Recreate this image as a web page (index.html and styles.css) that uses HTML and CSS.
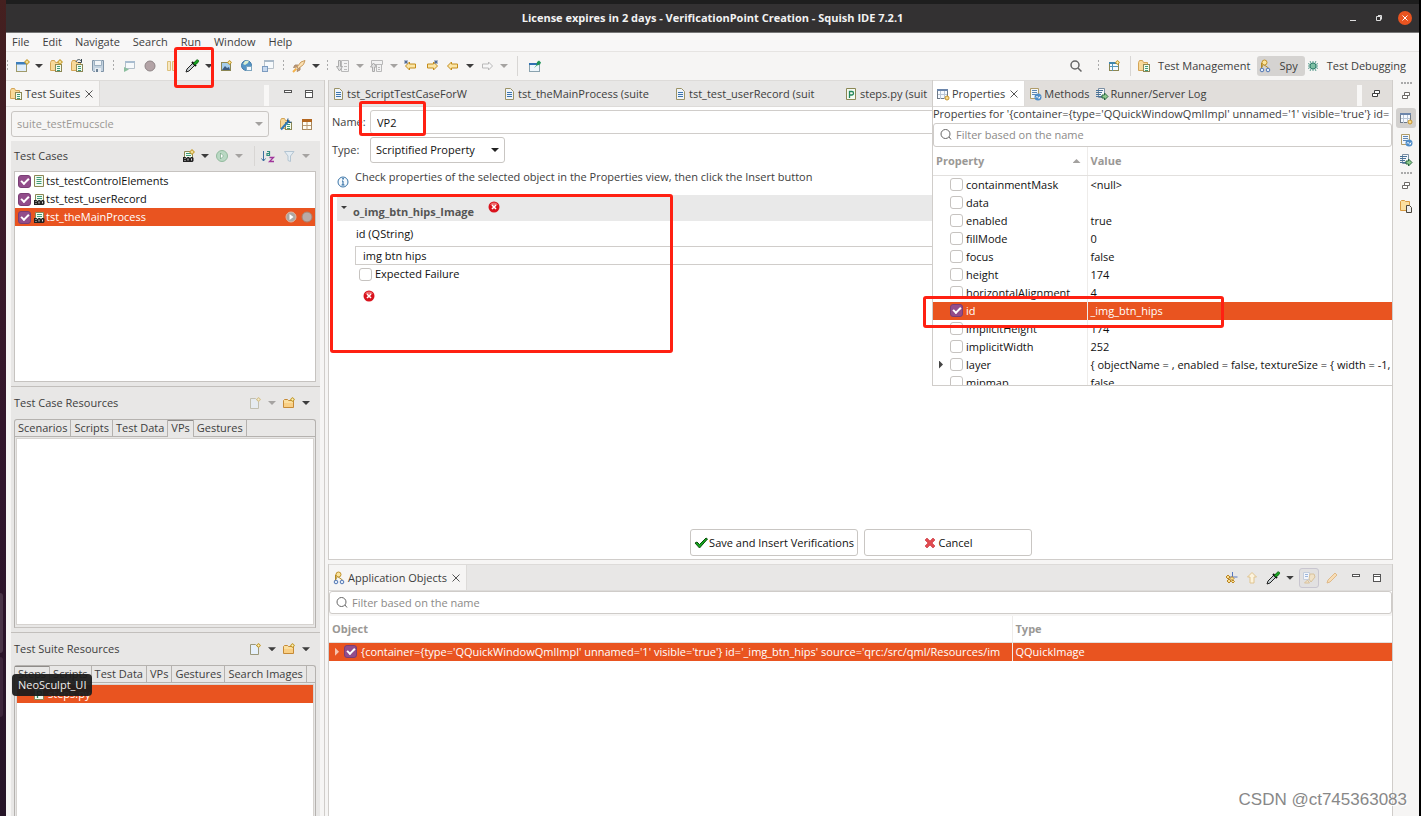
FILE: index.html
```html
<!DOCTYPE html>
<html lang="en">
<head>
<meta charset="utf-8">
<title>VerificationPoint Creation - Squish IDE 7.2.1</title>
<link rel="stylesheet" href="styles.css">
</head>
<body>
<svg class="sprite" aria-hidden="true">
  <symbol id="plus" viewBox="0 0 6 6"><path d="M3 0L6 3 3 6 0 3z" fill="#c39a2c"/><path d="M3 1.6v2.8M1.6 3h2.8" stroke="#fff3b8"/></symbol>
  <symbol id="new" viewBox="0 0 16 16"><rect x="2.500" y="4.500" width="10" height="9" fill="#dfedfa" stroke="#a09a6a"/><path d="M2 4h11v2.500H2z" fill="#3c7ebc"/><use href="#plus" x="10" y="1" width="6" height="6"/></symbol>
  <symbol id="suite" viewBox="0 0 16 16"><path d="M2.500 12.500v-8l1-2h3l1 2h4v8z" fill="#f8d99a" stroke="#d3a456"/><rect x="7.500" y="6.500" width="6" height="7" fill="#f4fbf0" stroke="#8b8754"/><path d="M9 8.500h3M9 10.500h3M9 12.500h3" stroke="#3f9a78"/></symbol>
  <symbol id="newsuite" viewBox="0 0 16 16"><use href="#suite" width="16" height="16"/><use href="#plus" x="9" y="1" width="6" height="6"/></symbol>
  <symbol id="opensuite" viewBox="0 0 16 16"><use href="#suite" width="16" height="16"/><path d="M7 4c1-3 4-3 5-1M12.500 1v3.500H9" fill="none" stroke="#37474f"/></symbol>
  <symbol id="save" viewBox="0 0 16 16"><path d="M2.500 2.500h11v11h-10l-1-1z" fill="#c3d2df" stroke="#8195a8"/><path d="M4.500 2.500h7v5h-7z" fill="#f2f5f8" stroke="#9db0c0"/><path d="M5 10h6v4H5z" fill="#e8edf2"/><path d="M6 11h2v3H6z" fill="#6d8296"/></symbol>
  <symbol id="launch" viewBox="0 0 16 16"><path d="M4.500 3.500h9v7h-9z" fill="#f6f9fb" stroke="#b3bfc9"/><path d="M4 3h10v2H4z" fill="#a9bdd0"/><path d="M3 9l5 2.500L3 14z" fill="#8cbf9f"/></symbol>
  <symbol id="stop" viewBox="0 0 16 16"><circle cx="8" cy="8" r="5" fill="#b3a3a6" stroke="#8f8587"/></symbol>
  <symbol id="pause" viewBox="0 0 16 16"><path d="M4.500 3.500h3v9h-3zM9.500 3.500h3v9h-3z" fill="#f7e8c2" stroke="#dcc07a"/></symbol>
  <symbol id="pick" viewBox="0 0 16 16"><path d="M2 14l1-3 6-6 2 2-6 6z" fill="#c9d1d3" stroke="#222"/><path d="M8 4l4 4" stroke="#111" stroke-width="2"/><path d="M9.500 5.500l2.500-3c2-1.500 3.500 0 2 2l-3 2.500z" fill="#18a321" stroke="#0b6a12"/></symbol>
  <symbol id="image" viewBox="0 0 16 16"><rect x="3.500" y="4.500" width="9" height="8" fill="#a5cdec" stroke="#8b8754"/><path d="M4 12l3-4 2 2 2-1 1 3z" fill="#3b5b81"/><use href="#plus" x="9" y="2" width="5" height="5"/></symbol>
  <symbol id="globe" viewBox="0 0 16 16"><circle cx="7.500" cy="7.500" r="5" fill="#5496c6" stroke="#417aa8"/><path d="M4 6l2-3 4-.5L9 5 6 7z" fill="#d9eed0"/><rect x="7.500" y="8.500" width="5" height="4" fill="#f4fafd" stroke="#7ea6c0"/></symbol>
  <symbol id="windows" viewBox="0 0 16 16"><path d="M4.500 2.500h9v8h-9z" fill="#f7fafc" stroke="#b9c2ca"/><path d="M4 2h10v2H4z" fill="#a9b9c8"/><rect x="2.500" y="8.500" width="5" height="5" fill="#c6d8ee" stroke="#7d9cc0"/></symbol>
  <symbol id="rocket" viewBox="0 0 16 16"><path d="M6 9l4-5 4-1.500-1.500 4-5 4z" fill="#fbe0b2" stroke="#c99a5b"/><path d="M7 7H4L2.500 9.500 6 9M9 9.500V12l-3 1.500L7 10" fill="#c9a27a" stroke="#9c7a5b" stroke-width=".8"/><path d="M2 14l3.500-3.500" stroke="#f4b24a" stroke-width="2"/></symbol>
  <symbol id="stepdown" viewBox="0 0 16 16"><path d="M6.500 2.500h7v11h-7z" fill="#f2f2f2" stroke="#b9b9b9"/><path d="M9 5.500h3M9 8.500h3M9 11.500h3" stroke="#bbb"/><path d="M3.500 2.500h2v6h2l-3 4.500-3-4.500h2z" fill="#e2e2e2" stroke="#aaa"/></symbol>
  <symbol id="stepup" viewBox="0 0 16 16"><path d="M2.500 2.500h11v4h-11zM7.500 6.500h5v7h-5z" fill="#f2f2f2" stroke="#b9b9b9"/><path d="M9 9.500h2M9 11.500h2" stroke="#bbb"/><path d="M3.500 13.500V9h-2l3-4 3 4h-2v4.500z" fill="#e2e2e2" stroke="#aaa"/></symbol>
  <symbol id="back" viewBox="0 0 16 16"><path d="M2.500 8l4-4v2h6v4h-6v2z" fill="#fbe6a7" stroke="#c48c1b"/></symbol>
  <symbol id="fwd" viewBox="0 0 16 16"><path d="M13.500 8l-4-4v2h-6v4h6v2z" fill="#fbe6a7" stroke="#c48c1b"/></symbol>
  <symbol id="fwdoff" viewBox="0 0 16 16"><path d="M13.500 8l-4-4v2h-6v4h6v2z" fill="#f7f7f7" stroke="#b9b9b9"/></symbol>
  <symbol id="backedit" viewBox="0 0 16 16"><use href="#back" width="16" height="16"/><path d="M3 2v4M1 4h4M1.500 2.500l3 3M4.500 2.500l-3 3" stroke="#45618c" stroke-width=".8"/></symbol>
  <symbol id="fwdedit" viewBox="0 0 16 16"><use href="#fwd" width="16" height="16"/><path d="M12 2v4M10 4h4M10.500 2.500l3 3M13.500 2.500l-3 3" stroke="#45618c" stroke-width=".8"/></symbol>
  <symbol id="pin" viewBox="0 0 16 16"><rect x="2.500" y="5.500" width="10" height="8" fill="#eef6fb" stroke="#8aa2ae"/><path d="M2 5h8v2H2z" fill="#2f71b2"/><path d="M7 10l2.500-3 .5-3 2-1.500 2 2-1 2-3 1z" fill="#1f9357"/></symbol>
  <symbol id="search" viewBox="0 0 16 16"><circle cx="7" cy="7" r="4" fill="none" stroke="#666" stroke-width="1.500"/><path d="M10 10l3.500 3.500" stroke="#666" stroke-width="1.500"/></symbol>
  <symbol id="find" viewBox="0 0 16 16"><circle cx="7.500" cy="7" r="4.500" fill="none" stroke="currentColor"/><path d="M11 10l2 2.500" stroke="currentColor"/></symbol>
  <symbol id="persp" viewBox="0 0 16 16"><rect x="3.500" y="4.500" width="9" height="8" fill="#f4faff" stroke="#8b8754"/><path d="M3 4h8v2H3z" fill="#3f86ac"/><path d="M6.500 6v7M4 8.500h8" stroke="#5797b8"/><use href="#plus" x="9" y="2" width="5" height="5"/></symbol>
  <symbol id="spy" viewBox="0 0 16 16"><path d="M4.500 10V5l7 5M7 5l-3 6" stroke="#b28a24" fill="none"/><circle cx="7.500" cy="4.500" r="2.500" fill="#fbe49c" stroke="#c1912b"/><circle cx="5" cy="12" r="1.800" fill="#e2edf9" stroke="#5277b5"/><circle cx="11" cy="12" r="1.800" fill="#e2edf9" stroke="#5277b5"/></symbol>
  <symbol id="bug" viewBox="0 0 16 16"><path d="M8 3v10M5 3l1.500 3M11 3L9.500 6M3 8h10M3 5.500l10 5M3 10.500l10-5M5 13l1.500-3M11 13l-1.500-3" stroke="#4b9384" stroke-width=".9"/><circle cx="8" cy="8" r="3" fill="#7dbfa4" stroke="#2f7f6b"/></symbol>
  <symbol id="wrench" viewBox="0 0 16 16"><use href="#suite" width="16" height="16"/><path d="M3 13.500l8-9" stroke="#2d78b8" stroke-width="2"/><path d="M10 2.500L9.500 5l1.500 1.500 2.500-.5" fill="none" stroke="#174f86"/></symbol>
  <symbol id="table" viewBox="0 0 16 16"><rect x="3.500" y="3.500" width="9" height="10" fill="#fffdf5" stroke="#a9885d"/><path d="M3 3h10v3H3z" fill="#b3661f"/><path d="M8 6v8M4 9.500h8" stroke="#b99c78"/></symbol>
  <symbol id="doc" viewBox="0 0 16 16"><path d="M3.500 2.500h9v11h-9z" fill="#f3fbf2" stroke="#8b8754"/><path d="M5.500 4.500h5M5.500 6.500h5M5.500 8.500h5M5.500 10.500h5" stroke="#3f9a78"/></symbol>
  <symbol id="bdd" viewBox="0 0 16 16"><path d="M4.500 3.500h8v7h-8z" fill="#f3fbf2" stroke="#8b8754"/><path d="M6 5.500h5M6 7.500h5" stroke="#3f9a78"/><path d="M3 9h2.500l1 1 1-1H9l1 1 1-1h1.500l1 1v3l-1 1H3z" fill="#222"/><path d="M4.500 10.500h1M4.500 12.500h1M8 10.500v2M11.500 10.500v2" stroke="#eee" stroke-width=".9"/></symbol>
  <symbol id="newbdd" viewBox="0 0 16 16"><use href="#bdd" width="16" height="16"/><use href="#plus" x="9" y="1" width="6" height="6"/></symbol>
  <symbol id="play" viewBox="0 0 16 16"><circle cx="8" cy="8" r="5.500" fill="#b9d8c3" stroke="#93bb9e"/><path d="M6.500 5l3 3-3 3z" fill="#fff" stroke="#6a9a78" stroke-width=".6"/></symbol>
  <symbol id="playg" viewBox="0 0 16 16"><circle cx="8" cy="8" r="5" fill="#aaa6a3" stroke="#e1b49f"/><path d="M6.500 5l4 3-4 3z" fill="#fff"/></symbol>
  <symbol id="stopg" viewBox="0 0 16 16"><circle cx="8" cy="8" r="5" fill="#b9aaa6" stroke="#a9816f"/></symbol>
  <symbol id="sort" viewBox="0 0 16 16"><path d="M3.500 3v10M1.500 10.500l2 2.500 2-2.500" fill="none" stroke="#3d6fa0"/><path d="M7 3.500h2.500V7.500H7V5.500h2.500" fill="none" stroke="#2d8c7c" stroke-width="1.200"/><path d="M9.500 9.500h4l-4 4h4.500" fill="none" stroke="#a0369c" stroke-width="1.300"/></symbol>
  <symbol id="filter" viewBox="0 0 16 16"><path d="M3.500 3.500h9.500L9.500 8v5.500l-2.500-1V8z" fill="#e4ecf2" stroke="#b4c5d2"/></symbol>
  <symbol id="newfile" viewBox="0 0 16 16"><path d="M3.500 3.500h5l3 3v7h-8z" fill="#e6f0fb" stroke="#9b987b"/><use href="#plus" x="9" y="2" width="5" height="5"/></symbol>
  <symbol id="newfolder" viewBox="0 0 16 16"><path d="M2.500 12.500v-7l1-1h3l1 1h5v7z" fill="#fbdf9f" stroke="#c58a37"/><path d="M3 8h9v4H3z" fill="#f9cf84"/><use href="#plus" x="9" y="2" width="5" height="5"/></symbol>
  <symbol id="page" viewBox="0 0 16 16"><path d="M4.500 2.500h5l3 3v8h-8z" fill="#eef4fb" stroke="#9c9366"/><path d="M6 6.500h5M6 8.500h5M6 10.500h5" stroke="#3b74ad"/></symbol>
  <symbol id="py" viewBox="0 0 16 16"><path d="M3.500 2.500h9v11h-9z" fill="#f3fbf2" stroke="#8b8754"/><path d="M6.500 12V5.500H9q1.500 0 1.500 1.700T9 9H6.500" fill="none" stroke="#23855a" stroke-width="1.300"/></symbol>
  <symbol id="props" viewBox="0 0 16 16"><rect x="2.500" y="3.500" width="10" height="9" fill="#f6faff" stroke="#6e7987"/><path d="M2 3h11v2H2z" fill="#6c86ab"/><path d="M5.500 5v8M9.500 5v8M3 8.500h9" stroke="#b9c6d6"/><circle cx="12" cy="12" r="2" fill="#fbdc8c" stroke="#c6952f"/></symbol>
  <symbol id="methods" viewBox="0 0 16 16"><path d="M3.500 2.500h8v10h-8z" fill="#f4f7fa" stroke="#b09c69"/><path d="M5 4.500h5M5 6.500h5M5 8.500h5" stroke="#5e87b5"/><circle cx="11" cy="11" r="3.500" fill="#4f8dc9"/><path d="M9 11.500q1-2.500 2 0t2-1" fill="none" stroke="#fff"/></symbol>
  <symbol id="log" viewBox="0 0 16 16"><path d="M4.500 2.500h6v9h-6z" fill="#f4f7fa" stroke="#7c8fa3"/><path d="M2 4.500h7M2 6.500h6M2 8.500h5M2 10.500h6" stroke="#4b7398"/><path d="M8 9h2.500V7l3.500 3.500-3.500 3.500v-2H8z" fill="#8fca8d" stroke="#2b6842"/></symbol>
  <symbol id="files" viewBox="0 0 16 16"><path d="M2.500 12.500v-9l1-1h3l1 1h4v9z" fill="#fbdf9f" stroke="#d79a3f"/><path d="M8.500 7.500h3l2 2v5h-5z" fill="#eee" stroke="#4b463d"/></symbol>
  <symbol id="min" viewBox="0 0 16 16"><rect x="4.500" y="4.500" width="7" height="2" fill="#fff" stroke="#555"/></symbol>
  <symbol id="max" viewBox="0 0 16 16"><rect x="4.500" y="4.500" width="7" height="7" fill="#fff" stroke="#555"/><path d="M4 6.500h8" stroke="#555"/></symbol>
  <symbol id="restore" viewBox="0 0 16 16"><path d="M6.500 4.500h5v3h-5zM4.500 7.500h5v3h-5z" fill="#fff" stroke="currentColor"/></symbol>
  <symbol id="close" viewBox="0 0 16 16"><path d="M4.500 4.500l7 7M11.500 4.500l-7 7" stroke="#555"/></symbol>
  <symbol id="error" viewBox="0 0 16 16"><circle cx="8" cy="8" r="5.500" fill="#d9131d"/><path d="M4 6a4.500 4.500 0 018 0z" fill="#ee6a6c"/><path d="M6 6l4 4M10 6l-4 4" stroke="#fff" stroke-width="1.600"/></symbol>
  <symbol id="info" viewBox="0 0 16 16"><circle cx="8" cy="8" r="5" fill="#f4f9fd" stroke="#3974a8"/><path d="M7 7h1v4M6.500 11h3" fill="none" stroke="#23659f"/><path d="M7.300 4.800h1.500" stroke="#23659f" stroke-width="1.500"/></symbol>
  <symbol id="check" viewBox="0 0 16 16"><path d="M2 8l2-1 2.500 2.500L13 3l1.500 1L6.500 13z" fill="#17a51d" stroke="#08500c"/></symbol>
  <symbol id="cross" viewBox="0 0 16 16"><path d="M3 5l2-2 3 3 3-3 2 2-3 3 3 3-2 2-3-3-3 3-2-2 3-3z" fill="#e14a50" stroke="#c62f38" stroke-width=".6"/></symbol>
  <symbol id="tree" viewBox="0 0 16 16"><path d="M9.500 2v10M6 7h8.500" stroke="#5677c0"/><path d="M5 5l2 2-2 2-2-2zM9 6.500l2 2-2 2-2-2zM6 9l2 2-2 2-2-2zM10 10l1.500 1.500L10 13l-1.500-1.500z" fill="#fbdc8c" stroke="#b98523"/></symbol>
  <symbol id="up" viewBox="0 0 16 16"><path d="M8 2.500l4.500 4.500H10v6H6V7H3.500z" fill="#fcf3dd" stroke="#e0c48f"/></symbol>
  <symbol id="link" viewBox="0 0 16 16"><path d="M2.500 2.500h6v7h-6z" fill="#f3f6fb" stroke="#c5cedb"/><path d="M4 4.500h3M4 6.500h3" stroke="#9cb6dc"/><path d="M3.500 13l3-3 2 3zM9 4h4l1 3-4 5-2-3z" fill="#f0e2c8" stroke="#d8c29c"/></symbol>
  <symbol id="pencil" viewBox="0 0 16 16"><path d="M3 13l1-3 7-7 2 2-7 7z" fill="#f8ddb6" stroke="#dfb988"/></symbol>
</svg>

<div class="desktop">
  <div class="launcher"><span class="dock"></span><span class="dock dock-long"></span></div>
  <div class="window">
    <header class="titlebar">
      <h1 class="title">License expires in 2 days - VerificationPoint Creation - Squish IDE 7.2.1</h1>
      <div class="wincontrols">
        <button class="winbtn" aria-label="Minimize"><svg viewBox="0 0 14 14"><path d="M4 9.500h6" stroke="#ddd"/></svg></button>
        <button class="winbtn" aria-label="Restore"><svg viewBox="0 0 14 14"><path d="M4.500 5.500h4v4h-4zM6 4.500h3.500v4" fill="none" stroke="#ddd"/></svg></button>
        <button class="winbtn winclose" aria-label="Close"><svg viewBox="0 0 14 14"><path d="M4.500 4.500l5 5M9.500 4.500l-5 5" stroke="#fff"/></svg></button>
      </div>
    </header>
    <nav class="menubar">
      <button>File</button><button>Edit</button><button>Navigate</button><button>Search</button><button>Run</button><button>Window</button><button>Help</button>
    </nav>
    <div class="toolbar">
      <span class="grip"></span>
      <button class="tool" aria-label="New"><svg><use href="#new"/></svg></button><button class="caret" aria-label="New options"></button>
      <button class="tool" aria-label="New suite"><svg><use href="#newsuite"/></svg></button>
      <button class="tool" aria-label="Open suite"><svg><use href="#opensuite"/></svg></button>
      <button class="tool" aria-label="Save"><svg><use href="#save"/></svg></button>
      <span class="grip"></span>
      <button class="tool" aria-label="Launch"><svg><use href="#launch"/></svg></button>
      <button class="tool" aria-label="Stop"><svg><use href="#stop"/></svg></button>
      <button class="tool" aria-label="Pause"><svg><use href="#pause"/></svg></button>
      <button class="tool marked" aria-label="Pick"><svg><use href="#pick"/></svg></button><button class="caret" aria-label="Pick options"></button>
      <button class="tool" aria-label="Image"><svg><use href="#image"/></svg></button>
      <button class="tool" aria-label="Web"><svg><use href="#globe"/></svg></button>
      <button class="tool" aria-label="Windows"><svg><use href="#windows"/></svg></button>
      <span class="grip"></span>
      <button class="tool" aria-label="External tools"><svg><use href="#rocket"/></svg></button><button class="caret" aria-label="Tool options"></button>
      <span class="grip"></span>
      <button class="tool" aria-label="Next annotation"><svg><use href="#stepdown"/></svg></button><button class="caret off" aria-label="Next options"></button>
      <button class="tool" aria-label="Previous annotation"><svg><use href="#stepup"/></svg></button><button class="caret off" aria-label="Previous options"></button>
      <button class="tool" aria-label="Last edit"><svg><use href="#backedit"/></svg></button>
      <button class="tool" aria-label="Next edit"><svg><use href="#fwdedit"/></svg></button>
      <button class="tool" aria-label="Back"><svg><use href="#back"/></svg></button><button class="caret" aria-label="Back options"></button>
      <button class="tool" aria-label="Forward"><svg><use href="#fwdoff"/></svg></button><button class="caret off" aria-label="Forward options"></button>
      <span class="vsep"></span>
      <button class="tool" aria-label="Pin editor"><svg><use href="#pin"/></svg></button>
      <div class="perspectives">
        <button class="tool find" aria-label="Search"><svg><use href="#search"/></svg></button>
        <span class="grip"></span>
        <button class="tool" aria-label="Open perspective"><svg><use href="#persp"/></svg></button>
        <span class="vsep"></span>
        <div class="switcher">
          <button class="persp"><svg><use href="#suite"/></svg>Test Management</button>
          <button class="persp current"><svg><use href="#spy"/></svg>Spy</button>
          <button class="persp"><svg><use href="#bug"/></svg>Test Debugging</button>
        </div>
      </div>
    </div>

    <div class="workspace">
      <aside class="side">
        <div class="tabbar">
          <button class="tab active"><svg><use href="#suite"/></svg>Test Suites<svg><use href="#close"/></svg></button>
          <div class="tabtools"><span class="notch"></span><button class="tool" aria-label="Minimize view"><svg><use href="#min"/></svg></button><button class="tool" aria-label="Maximize view"><svg><use href="#max"/></svg></button></div>
        </div>
        <div class="suiterow">
          <div class="combobox"><select class="combo" aria-label="Test suite"><option>suite_testEmucscle</option></select></div>
          <button class="tool" aria-label="Suite settings"><svg><use href="#wrench"/></svg></button>
          <button class="tool" aria-label="Suite table"><svg><use href="#table"/></svg></button>
        </div>
        <div class="groups">
          <section class="group cases">
            <div class="grouphead"><h2>Test Cases</h2>
              <button class="tool" aria-label="New test case"><svg><use href="#newbdd"/></svg></button><button class="caret" aria-label="New options"></button>
              <button class="tool" aria-label="Run"><svg><use href="#play"/></svg></button><button class="caret off" aria-label="Run options"></button>
              <span class="vsep"></span>
              <button class="tool" aria-label="Sort"><svg><use href="#sort"/></svg></button>
              <button class="tool" aria-label="Filter"><svg><use href="#filter"/></svg></button><button class="caret off" aria-label="Filter options"></button>
            </div>
            <ul class="list">
              <li><label><input type="checkbox" checked><svg><use href="#doc"/></svg>tst_testControlElements</label></li>
              <li><label><input type="checkbox" checked><svg><use href="#bdd"/></svg>tst_test_userRecord</label></li>
              <li class="selected"><label><input type="checkbox" checked><svg><use href="#bdd"/></svg>tst_theMainProcess</label><span class="rowtools"><svg><use href="#playg"/></svg><svg><use href="#stopg"/></svg></span></li>
            </ul>
          </section>
          <section class="group resources">
            <div class="grouphead"><h2>Test Case Resources</h2>
              <button class="tool faded" aria-label="New file"><svg><use href="#newfile"/></svg></button><button class="caret off" aria-label="New file options"></button>
              <button class="tool" aria-label="New folder"><svg><use href="#newfolder"/></svg></button><button class="caret" aria-label="New folder options"></button>
            </div>
            <div class="notebook">
              <div class="pages"><button>Scenarios</button><button>Scripts</button><button>Test Data</button><button class="on">VPs</button><button>Gestures</button></div>
              <div class="pagebody"></div>
            </div>
          </section>
          <section class="group suite">
            <div class="grouphead"><h2>Test Suite Resources</h2>
              <button class="tool" aria-label="New file"><svg><use href="#newfile"/></svg></button><button class="caret" aria-label="New file options"></button>
              <button class="tool" aria-label="New folder"><svg><use href="#newfolder"/></svg></button><button class="caret" aria-label="New folder options"></button>
            </div>
            <div class="notebook">
              <div class="pages"><button class="on">Steps</button><button>Scripts</button><button>Test Data</button><button>VPs</button><button>Gestures</button><button>Search Images</button></div>
              <div class="pagebody"><div class="steprow"><svg><use href="#py"/></svg>steps.py</div></div>
            </div>
            <div class="tooltip" role="tooltip">NeoSculpt_UI</div>
          </section>
        </div>
      </aside>

      <main class="center">
        <section class="editor">
          <div class="tabbar">
            <button class="tab doc"><svg><use href="#page"/></svg>tst_ScriptTestCaseForW</button>
            <button class="tab doc"><svg><use href="#page"/></svg>tst_theMainProcess (suite</button>
            <button class="tab doc"><svg><use href="#page"/></svg>tst_test_userRecord (suit</button>
            <button class="tab doc"><svg><use href="#py"/></svg>steps.py (suit</button>
          </div>
          <form class="form">
            <div class="field"><label for="name">Name:</label><input id="name" class="text" value="VP2"></div>
            <div class="field"><label for="type">Type:</label><div class="combobox typebox"><select id="type" class="combo"><option>Scriptified Property</option></select></div></div>
            <p class="hint"><svg><use href="#info"/></svg><span>Check properties of the selected object in the Properties view, then click the Insert button</span></p>
            <section class="verification">
              <h3 class="vhead"><span class="caret"></span><span class="vname">o_img_btn_hips_Image</span><svg><use href="#error"/></svg></h3>
              <label class="vlabel" for="vid">id (QString)</label>
              <input id="vid" class="text vinput" value="img btn hips">
              <label class="vcheck"><input type="checkbox">Expected Failure</label>
              <svg class="verror"><use href="#error"/></svg>
              <span class="mark mark-form"></span>
            </section>
            <div class="actions">
              <button type="button"><svg><use href="#check"/></svg>Save and Insert Verifications</button>
              <button type="button"><svg><use href="#cross"/></svg>Cancel</button>
            </div>
            <span class="mark mark-name"></span>
          </form>

          <section class="props">
            <div class="tabbar">
              <button class="tab active"><svg><use href="#props"/></svg>Properties<svg><use href="#close"/></svg></button>
              <button class="tab"><svg><use href="#methods"/></svg>Methods</button>
              <button class="tab"><svg><use href="#log"/></svg>Runner/Server Log</button>
              <div class="tabtools"><span class="notch"></span><button class="tool" aria-label="Restore view"><svg><use href="#restore"/></svg></button></div>
            </div>
            <p class="caption">Properties for '{container={type='QQuickWindowQmlImpl' unnamed='1' visible='true'} id=</p>
            <label class="filter"><svg><use href="#find"/></svg><input placeholder="Filter based on the name" aria-label="Filter properties"></label>
            <div class="scroll">
              <table class="grid">
                <thead><tr><th class="c-prop">Property<span class="sortup"></span></th><th>Value</th></tr></thead>
                <tbody>
                  <tr><td><label><input type="checkbox">containmentMask</label></td><td>&lt;null&gt;</td></tr>
                  <tr><td><label><input type="checkbox">data</label></td><td></td></tr>
                  <tr><td><label><input type="checkbox">enabled</label></td><td>true</td></tr>
                  <tr><td><label><input type="checkbox">fillMode</label></td><td>0</td></tr>
                  <tr><td><label><input type="checkbox">focus</label></td><td>false</td></tr>
                  <tr><td><label><input type="checkbox">height</label></td><td>174</td></tr>
                  <tr><td><label><input type="checkbox">horizontalAlignment</label></td><td>4</td></tr>
                  <tr class="selected"><td><label><input type="checkbox" checked>id</label></td><td>_img_btn_hips</td></tr>
                  <tr><td><label><input type="checkbox">implicitHeight</label></td><td>174</td></tr>
                  <tr><td><label><input type="checkbox">implicitWidth</label></td><td>252</td></tr>
                  <tr class="expandable"><td><label><input type="checkbox">layer</label></td><td>{ objectName = , enabled = false, textureSize = { width = -1,</td></tr>
                  <tr><td><label><input type="checkbox">mipmap</label></td><td>false</td></tr>
                </tbody>
              </table>
            </div>
            <span class="mark mark-id"></span>
          </section>
        </section>

        <section class="objects">
          <div class="tabbar">
            <button class="tab active"><svg><use href="#spy"/></svg>Application Objects<svg><use href="#close"/></svg></button>
            <div class="tabtools">
              <button class="tool" aria-label="Refresh tree"><svg><use href="#tree"/></svg></button>
              <button class="tool" aria-label="Up"><svg><use href="#up"/></svg></button>
              <button class="tool" aria-label="Pick"><svg><use href="#pick"/></svg></button><button class="caret" aria-label="Pick options"></button>
              <button class="tool toggled" aria-label="Link"><svg><use href="#link"/></svg></button>
              <button class="tool" aria-label="Edit"><svg><use href="#pencil"/></svg></button>
              <button class="tool spaced" aria-label="Minimize view"><svg><use href="#min"/></svg></button>
              <button class="tool" aria-label="Maximize view"><svg><use href="#max"/></svg></button>
            </div>
          </div>
          <label class="filter"><svg><use href="#find"/></svg><input placeholder="Filter based on the name" aria-label="Filter objects"></label>
          <table class="grid tree">
            <thead><tr><th class="c-obj">Object</th><th>Type</th></tr></thead>
            <tbody><tr class="selected expandable"><td><label><input type="checkbox" checked>{container={type='QQuickWindowQmlImpl' unnamed='1' visible='true'} id='_img_btn_hips' source='qrc:/src/qml/Resources/im</label></td><td>QQuickImage</td></tr></tbody>
          </table>
        </section>
      </main>

      <div class="trim">
        <span class="dots"></span>
        <button class="tool" aria-label="Restore"><svg><use href="#restore"/></svg></button>
        <button class="tool pressed" aria-label="Properties"><svg><use href="#props"/></svg></button>
        <button class="tool" aria-label="Methods"><svg><use href="#methods"/></svg></button>
        <button class="tool" aria-label="Log"><svg><use href="#log"/></svg></button>
        <span class="dots"></span>
        <button class="tool" aria-label="Restore"><svg><use href="#restore"/></svg></button>
        <button class="tool" aria-label="Files"><svg><use href="#files"/></svg></button>
      </div>
    </div>
  </div>
</div>
<div class="watermark">CSDN @ct745363083</div>
</body>
</html>
```
FILE: styles.css
```css
*, *::before, *::after { box-sizing: border-box; }
:root {
  --orange: #e95420;
  --line: #d0cdca;
  --bg: #f6f5f4;
  --bar: #e8e7e6;
  --text: #3d3d3d;
}
body {
  margin: 0;
  height: 100vh;
  overflow: hidden;
  background: #000;
  color: var(--text);
  font: 11px/16px "Open Sans", "Noto Sans", sans-serif;
}
button, input, select { font: inherit; color: inherit; margin: 0; padding: 0; border: 0; background: none; border-radius: 0; }
input, select { outline: 0; appearance: none; }
h1, h2, h3, p, ul { margin: 0; padding: 0; font-size: 11px; }
svg { width: 16px; height: 16px; flex: none; display: block; }
.sprite { position: absolute; width: 0; height: 0; }

.desktop { display: flex; height: 100vh; padding-right: 2px; }
.launcher { width: 6px; display: flex; flex-direction: column; justify-content: flex-end; gap: 4px; padding-bottom: 99px; background: linear-gradient(#45201f, #3c1a28 25%, #30152c 60%, #251326); }
.dock { height: 60px; width: 3px; background: #4a3548; border-radius: 0 3px 3px 0; }
.dock-long { background: #3d263b; }
.window { flex: 1; min-width: 0; display: flex; flex-direction: column; background: var(--bg); }

.titlebar { height: 33px; border-top: 4px solid #1e1e1e; border-bottom: 1px solid #777; background: #333132; display: flex; align-items: center; position: relative; flex: none; }
.title { flex: 1; text-align: center; color: #f2f2f2; }
.wincontrols { position: absolute; right: 7px; display: flex; gap: 12px; }
.winbtn { width: 14px; height: 14px; border-radius: 7px; }
.winbtn svg { width: 14px; height: 14px; }
.winclose { background: var(--orange); }

.menubar { height: 19px; display: flex; gap: 13px; padding-left: 6px; border-bottom: 1px solid #e6e4e2; background: #f8f7f7; flex: none; }
.toolbar { height: 28px; display: flex; align-items: center; gap: 5px; flex: none; }
.tool { width: 16px; height: 16px; flex: none; }
.caret { width: 8px; height: 4px; flex: none; background: #3d3d3d; clip-path: polygon(0 0, 100% 0, 50% 100%); }
.caret.off { background: #a5a3a1; }
.faded { opacity: .5; }
.grip { width: 3px; height: 12px; margin: 0 1px; background: repeating-linear-gradient(#aaa 0 2px, transparent 2px 4px) 1px 0 / 1px 100% no-repeat; flex: none; }
.grip:first-child { margin: 0; }
.vsep { width: 1px; height: 20px; margin: 0 4px; background: #d8d6d4; flex: none; }
.perspectives { margin-left: auto; display: flex; align-items: center; gap: 5px; padding-right: 6px; }
.perspectives .vsep { margin: 0 0 0 3px; }
.find { margin-right: 7px; }
.switcher { display: flex; }
.persp { display: flex; align-items: center; gap: 6px; height: 20px; padding: 0 7px 0 0; }
.current { background: #d5d3d1; border-radius: 3px; }

.workspace { flex: 1; min-height: 0; display: flex; }
.tabbar { display: flex; height: 27px; background: var(--bar); border-top: 1px solid #dddbd9; border-bottom: 1px solid #dddbd9; flex: none; }
.tab { display: flex; align-items: center; gap: 1px; padding: 0 2px; white-space: nowrap; }
.tab.active { background: var(--bg); border-right: 1px solid #dddbd9; }
.tabtools { margin-left: auto; display: flex; align-items: center; gap: 5px; padding-right: 7px; }
.notch { width: 5px; height: 21px; margin-right: 6px; background: #f8f7f6; align-self: flex-end; }

.side { width: 319px; border-right: 1px solid var(--line); display: flex; flex-direction: column; flex: none; }
.suiterow { display: flex; align-items: center; gap: 5px; padding: 4px 9px 4px 5px; }
.combobox { flex: 1; position: relative; display: flex; }
.combobox::after { content: ""; position: absolute; right: 6px; top: 11px; width: 8px; height: 4px; background: #a3a19f; clip-path: polygon(0 0, 100% 0, 50% 100%); pointer-events: none; }
.combo { flex: 1; height: 26px; padding: 0 5px; border: 1px solid #c9c6c3; border-radius: 3px; }
.suiterow .combobox { margin-right: 4px; color: #9a9895; }
.typebox { flex: 0 0 135px; color: #111; }
.typebox::after { background: #222; }
.groups { flex: 1; min-height: 0; display: flex; flex-direction: column; margin: 0 4px 0 5px; background: var(--bar); }
.group { display: flex; flex-direction: column; padding: 0 4px 4px 3px; border-bottom: 1px solid #c2bfbc; position: relative; }
.cases { flex: 240; }
.resources { flex: 240; }
.suite { flex: 182; padding-bottom: 0; border-bottom: 0; }
.grouphead { height: 32px; display: flex; align-items: center; gap: 5px; padding-right: 6px; flex: none; }
.cases .grouphead { height: 30px; }
.grouphead h2 { flex: 1; font-weight: 400; }
.grouphead .vsep { margin: 0 0 0 6px; }
.list { flex: 1; list-style: none; border: 1px solid #c6c3c0; background: #fff; color: #111; }
.list li { display: flex; height: 18px; align-items: center; padding: 0 0 0 3px; }
.list label { display: flex; align-items: center; flex: 1; }
.list label svg { margin-right: -1px; }
.rowtools { display: flex; }
.selected, .list .selected { background: var(--orange); color: #fff; }
input[type="checkbox"] { width: 13px; height: 13px; flex: none; border: 1px solid #c6c3c0; border-radius: 3px; background: #fff; position: relative; }
input[type="checkbox"]:checked { background: #924d8b; border-color: #7a3e75; }
input[type="checkbox"]:checked::after { content: ""; position: absolute; left: 2px; top: 2px; width: 8px; height: 5px; border: solid #fff; border-width: 0 0 2px 2px; transform: rotate(-45deg); }

.notebook { flex: 1; min-height: 0; border: 1px solid #b5b2af; border-bottom-color: #c6c3c0; border-radius: 3px 3px 0 0; display: flex; flex-direction: column; }
.pages { display: flex; height: 17px; border-bottom: 1px solid #b5b2af; flex: none; }
.pages button { height: 16px; padding: 0 3px; border-right: 1px solid #b5b2af; white-space: nowrap; }
.pages .on { height: 17px; padding-bottom: 1px; background: var(--bar); box-shadow: inset 0 1px #8f8c89; }
.pagebody { flex: 1; margin: 1px 1px 2px; background: #fff; border: 1px solid #d6d3d0; }
.suite .notebook, .suite .pagebody { border-bottom: 0; }
.suite .pagebody { margin-bottom: 0; }
.steprow { display: flex; align-items: center; gap: 1px; height: 18px; padding-left: 14px; background: var(--orange); color: #fff; }
.tooltip { position: absolute; left: 1px; top: 41px; padding: 3px 6px; background: rgba(28, 28, 28, .94); color: #eee; border-radius: 4px; }

.center { flex: 1; min-width: 0; display: flex; flex-direction: column; gap: 4px; margin-left: 3px; }
.editor { flex: 480; min-height: 0; position: relative; display: flex; flex-direction: column; border: solid var(--line); border-width: 0 1px 1px 1px; background: #fff; }
.doc { width: 171px; padding-left: 1px; overflow: hidden; }
.form { flex: 1; display: flex; flex-direction: column; position: relative; }
.field { display: flex; align-items: center; padding: 3px 0 0 3px; }
.field > label { width: 38px; }
.text { flex: 1; height: 24px; border: 1px solid #d0cdca; border-radius: 3px; padding: 0 6px; color: #111; }
.hint { display: flex; gap: 4px; padding: 6px 0 0 6px; white-space: nowrap; }
.hint svg { margin-top: 5px; }
.verification { display: flex; flex-direction: column; align-items: flex-start; position: relative; margin: 5px 0 0 8px; }
.vhead { display: flex; width: 100%; height: 26px; padding: 0 0 0 4px; background: #e9e9e9; align-items: center; font-weight: 700; color: #555; }
.vhead .caret { width: 6px; height: 3px; align-self: flex-start; margin: 11px 6px 0 0; }
.vname { padding-top: 7px; }
.vhead svg { margin: 0 0 2px 12px; }
.vlabel { margin: 5px 0 4px 19px; color: #111; }
.vinput { align-self: stretch; flex: none; height: 19px; margin-left: 18px; border-radius: 0; padding: 0 7px; }
.vcheck { display: flex; align-items: center; gap: 3px; margin: 1px 0 6px 22px; color: #111; }
.verror { margin-left: 24px; }
.actions { margin-top: auto; display: flex; justify-content: center; gap: 6px; padding-bottom: 3px; }
.actions button { width: 168px; height: 27px; display: flex; align-items: center; justify-content: center; border: 1px solid #c9c6c3; border-radius: 3px; background: #fff; color: #111; white-space: nowrap; }

.mark { position: absolute; border: 3px solid #ff2012; border-radius: 3px; pointer-events: none; z-index: 3; }
.marked { position: relative; }
.marked::after { content: ""; position: absolute; left: -10px; top: -11px; width: 40px; height: 41px; border: 3px solid #ff2012; border-radius: 3px; z-index: 3; }
.mark-name { left: 30px; top: -6px; width: 67px; height: 35px; }
.mark-form { left: -7px; top: -1px; width: 343px; height: 159px; }
.mark-id { left: -10px; top: 216px; width: 301px; height: 32px; }

.props { position: absolute; right: 0; top: 0; width: 460px; height: 306px; border: 1px solid var(--line); border-top: 0; border-right: 0; background: #fff; display: flex; flex-direction: column; }
.props .tabbar { background: #e1dedb; }
.props .tab.active { background: #fff; }
.props .tabtools { gap: 0; padding-right: 8px; }
.caption { line-height: 14px; height: 16px; white-space: nowrap; overflow: hidden; flex: none; }
.filter { display: flex; align-items: center; height: 24px; gap: 2px; padding-left: 4px; border: 1px solid #cfccc9; border-radius: 3px; background: #fff; flex: none; color: #666; }
.filter input { flex: 1; }
.filter input::placeholder { color: #8c8a88; opacity: 1; }
.scroll { flex: 1; min-height: 0; overflow: hidden; }
.grid { width: 100%; table-layout: fixed; border-collapse: collapse; color: #111; background: #fff; }
.grid th { height: 28px; padding: 0 3px; text-align: left; color: #9a9895; border-bottom: 1px solid #e2e0de; }
.grid td { height: 18px; padding: 0 3px; line-height: 18px; white-space: nowrap; overflow: hidden; }
.grid th + th, .grid td + td { border-left: 1px solid #eeecea; }
.c-prop { width: 154px; position: relative; }
.sortup { position: absolute; right: 6px; top: 12px; width: 8px; height: 4px; background: #a3a19f; clip-path: polygon(50% 0, 100% 100%, 0 100%); }
.grid label { display: flex; align-items: center; gap: 3px; height: 18px; padding-left: 14px; }
.grid td:first-child { position: relative; padding-right: 0; }
.expandable td:first-child::before { content: ""; position: absolute; left: 6px; top: 5px; width: 4px; height: 8px; background: #444; clip-path: polygon(0 0, 100% 50%, 0 100%); }
.selected.expandable td:first-child::before { background: #f6c3ae; }

.objects { flex: 252; min-height: 0; display: flex; flex-direction: column; border: solid var(--line); border-width: 0 1px; background: #fff; }
.objects .filter { height: 23px; box-shadow: 0 3px var(--bg); margin-bottom: 2px; }
.tree th { height: 26px; }
.tree label { padding-left: 12px; gap: 4px; }
.toggled { width: 20px; height: 20px; padding: 1px; border: 1px solid #c9c6d0; border-radius: 3px; background: #e2e1e1; }
.spaced { margin-left: 3px; }
.c-obj { width: 683px; }

.trim { width: 26px; display: flex; flex-direction: column; align-items: center; gap: 4px; padding-top: 2px; color: #6d6a67; flex: none; }
.dots { width: 11px; height: 2px; background: repeating-linear-gradient(90deg, #aaa 0 2px, transparent 2px 3px); }
.pressed { width: 20px; height: 20px; padding: 2px; border-radius: 3px; background: #d2d0ce; }
.watermark { position: absolute; right: 14px; bottom: 4px; font: 17px/24px "Liberation Sans", sans-serif; color: #888; text-shadow: 1px 1px #fff; }
```
